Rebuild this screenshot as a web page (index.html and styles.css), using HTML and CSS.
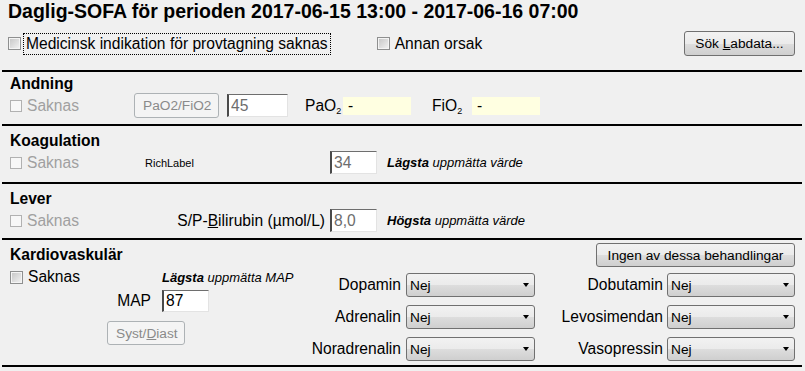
FILE: index.html
```html
<!DOCTYPE html>
<html lang="sv">
<head>
    <meta charset="UTF-8">
    <meta name="viewport" content="width=device-width, initial-scale=1.0">
    <title>Daglig-SOFA</title>
    <link rel="stylesheet" href="styles.css">
</head>
<body>
    <div class="form">
        <h1 class="title">Daglig-SOFA för perioden 2017-06-15 13:00 - 2017-06-16 07:00</h1>
        <div class="top-row">
            <label class="check check-focus"><input type="checkbox"><span class="focus">Medicinsk indikation för provtagning saknas</span></label>
            <label class="check check-other"><input type="checkbox">Annan orsak</label>
            <button class="btn btn-lab">Sök <u>L</u>abdata...</button>
        </div>

        <div class="section section-andning">
            <div class="heading">Andning</div>
            <div class="row">
                <label class="check disabled w-andning"><input type="checkbox" disabled>Saknas</label>
                <button class="btn btn-ratio" disabled>PaO2/FiO2</button>
                <input class="field field-ratio" value="45" disabled>
                <span class="gas-label">PaO<sub>2</sub></span>
                <span class="readout">-</span>
                <span class="gas-label gas-fio">FiO<sub>2</sub></span>
                <span class="readout">-</span>
            </div>
        </div>

        <div class="section section-koag">
            <div class="heading">Koagulation</div>
            <div class="row">
                <label class="check disabled w-koag"><input type="checkbox" disabled>Saknas</label>
                <span class="rich-label">RichLabel</span>
                <input class="field field-small" value="34" disabled>
                <span class="note"><b>Lägsta</b> uppmätta värde</span>
            </div>
        </div>

        <div class="section section-lever">
            <div class="heading">Lever</div>
            <div class="row">
                <label class="check disabled w-lever"><input type="checkbox" disabled>Saknas</label>
                <span class="lab-label">S/P-<u>B</u>ilirubin (µmol/L)</span>
                <input class="field field-small" value="8,0" disabled>
                <span class="note"><b>Högsta</b> uppmätta värde</span>
            </div>
        </div>

        <div class="section section-kardio">
            <div class="kardio-head">
                <div class="heading">Kardiovaskulär</div>
                <button class="btn btn-none">Ingen av dessa behandlingar</button>
            </div>
            <div class="kardio-body">
                <div class="map-block">
                    <label class="check"><input type="checkbox">Saknas</label>
                    <span class="note"><b>Lägsta</b> uppmätta MAP</span>
                    <span class="map-label">MAP</span>
                    <input class="field field-map" value="87">
                    <button class="btn btn-syst" disabled>Syst/<u>D</u>iast</button>
                </div>
                <div class="drug-grid drug-mid">
                    <label>Dopamin</label>
                    <div class="combo"><select><option>Nej</option></select></div>
                    <label>Adrenalin</label>
                    <div class="combo"><select><option>Nej</option></select></div>
                    <label>Noradrenalin</label>
                    <div class="combo"><select><option>Nej</option></select></div>
                </div>
                <div class="drug-grid drug-right">
                    <label>Dobutamin</label>
                    <div class="combo"><select><option>Nej</option></select></div>
                    <label>Levosimendan</label>
                    <div class="combo"><select><option>Nej</option></select></div>
                    <label>Vasopressin</label>
                    <div class="combo"><select><option>Nej</option></select></div>
                </div>
            </div>
        </div>
    </div>
</body>
</html>
```

FILE: styles.css
```css
body {
    margin: 0;
    background-color: #f0f0f0;
    font-family: "Liberation Sans", Arial, sans-serif;
    font-size: 15.6px;
    color: #000;
}
.form {
    width: 805px;
}
.title {
    margin: 0;
    padding-left: 8px;
    font-size: 19.5px;
    line-height: 22px;
    font-weight: bold;
}
.top-row {
    display: flex;
    align-items: center;
    height: 25px;
    margin-top: 9px;
    padding: 0 10px 0 8px;
}
.check {
    display: flex;
    align-items: center;
    gap: 5px;
    line-height: 18px;
    white-space: nowrap;
}
.check input {
    appearance: none;
    -webkit-appearance: none;
    box-sizing: border-box;
    flex: none;
    margin: 0;
    width: 13px;
    height: 13px;
    border: 1px solid #8e8f8f;
    background: linear-gradient(135deg, #c4c4c4, #f4f4f4);
    box-shadow: inset 0 0 0 1px #f4f4f4;
}
.check.disabled {
    color: #a0a0a0;
}
.check.disabled input {
    width: 12px;
    height: 12px;
    border-color: #b1b1b1;
    background: #f7f7f7;
    box-shadow: none;
}
.check-focus {
    gap: 3px;
}
.focus {
    outline: 1px dotted #000;
    padding: 1px 2px;
}
.check-other {
    margin-left: 47px;
}
.btn {
    box-sizing: border-box;
    height: 25px;
    padding: 0 8px;
    font-family: inherit;
    font-size: 13.7px;
    color: #000;
    border: 1px solid #707070;
    border-radius: 3px;
    background: linear-gradient(#f2f2f2 0%, #ebebeb 50%, #dddddd 51%, #cfcfcf 100%);
}
.btn:disabled {
    color: #8a8a8a;
    border-color: #adb2b5;
    background: #f4f4f4;
}
.btn-lab {
    margin-left: auto;
    width: 111px;
}

/* sections */
.section {
    margin: 0 3px 0 2px;
    border-top: 2px solid #000;
    padding: 6px 7px 0 8px;
}
.section-andning {
    margin-top: 14px;
    padding-top: 3px;
    padding-bottom: 6px;
}
.section-koag {
    padding-bottom: 7px;
}
.section-lever {
    padding-bottom: 5px;
}
.section-kardio {
    padding-top: 3px;
    padding-bottom: 4px;
    border-bottom: 2px solid #000;
}
.heading {
    font-weight: bold;
    line-height: 18px;
}
.row {
    display: flex;
    align-items: center;
    height: 25px;
}
.field {
    box-sizing: border-box;
    height: 23px;
    margin: 0;
    padding: 0 2px;
    font: inherit;
    color: #000;
    background: #fff;
    border: 1px solid;
    border-left-width: 2px;
    border-color: #6e6e6e #e3e3e3 #e3e3e3 #4a4a4a;
}
.field:disabled {
    color: #6d6d6d;
    background: #fff;
}
.w-andning {
    width: 124px;
}
.btn-ratio {
    width: 85px;
    margin-right: 8px;
}
.field-ratio {
    width: 61px;
    margin-right: 17px;
}
.gas-label {
    width: 38px;
    white-space: nowrap;
}
.gas-label sub {
    font-size: 9px;
    line-height: 0;
    vertical-align: -3px;
}
.gas-fio {
    width: 40px;
    margin-left: 21px;
}
.readout {
    box-sizing: border-box;
    width: 68px;
    height: 18px;
    line-height: 18px;
    padding-left: 5px;
    background: #ffffe1;
}
.w-koag {
    width: 135px;
}
.rich-label {
    width: 185px;
    font-size: 11px;
}
.field-small {
    width: 47px;
}
.note {
    margin-left: 10px;
    font-size: 13px;
    font-style: italic;
    white-space: nowrap;
}
.w-lever {
    width: 160px;
}
.lab-label {
    box-sizing: border-box;
    width: 160px;
    padding-right: 5px;
    text-align: right;
    white-space: nowrap;
}

/* kardiovaskulär */
.kardio-head {
    display: flex;
    justify-content: space-between;
    align-items: center;
    height: 24px;
}
.btn-none {
    width: 199px;
    height: 24px;
}
.kardio-body {
    display: flex;
}
.map-block {
    display: grid;
    grid-template-columns: 152px 148px;
    grid-template-rows: 16px 24px 24px;
    row-gap: 4px;
    align-items: center;
    padding-top: 2px;
}
.map-block .note {
    margin-left: 0;
}
.map-label {
    justify-self: end;
    padding-right: 11px;
}
.field-map {
    width: 47px;
    height: 22px;
}
.btn-syst {
    grid-column: 1 / span 2;
    justify-self: start;
    width: 78px;
    height: 24px;
    margin-left: 97px;
    margin-top: 8px;
}
.drug-grid {
    display: grid;
    grid-auto-rows: 24px;
    row-gap: 8px;
    align-items: center;
    padding-top: 6px;
}
.drug-grid label {
    text-align: right;
    white-space: nowrap;
}
.drug-mid {
    width: 225px;
    grid-template-columns: 1fr 129px;
    column-gap: 5px;
}
.drug-right {
    width: 260px;
    grid-template-columns: 1fr 128px;
    column-gap: 4px;
}
.combo {
    position: relative;
    height: 24px;
}
.combo select {
    appearance: none;
    -webkit-appearance: none;
    box-sizing: border-box;
    width: 100%;
    height: 24px;
    margin: 0;
    padding: 0 0 0 3px;
    font-family: inherit;
    font-size: 13.7px;
    color: #000;
    border: 1px solid #707070;
    border-radius: 3px;
    background: linear-gradient(#f2f2f2 0%, #ebebeb 50%, #dddddd 51%, #cfcfcf 100%);
}
.combo::after {
    content: "";
    position: absolute;
    right: 6px;
    top: 10px;
    border-left: 3.5px solid transparent;
    border-right: 3.5px solid transparent;
    border-top: 4px solid #000;
    pointer-events: none;
}
```
